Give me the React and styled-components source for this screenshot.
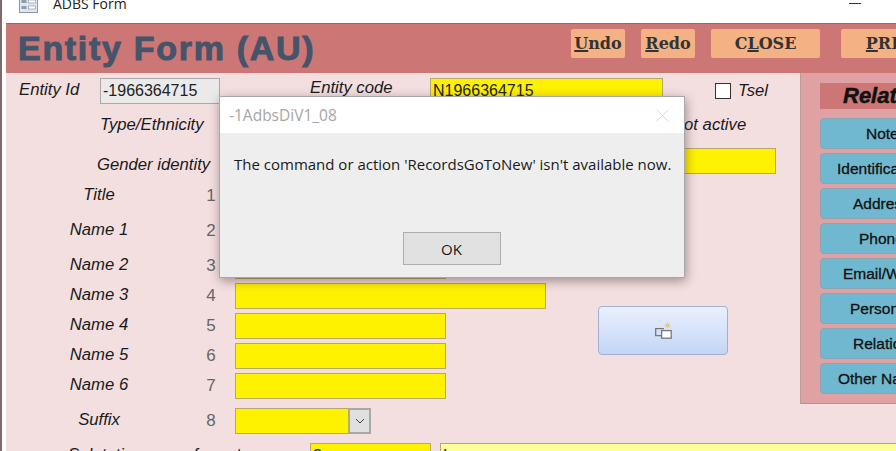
import styled, { createGlobalStyle } from 'styled-components';

const GlobalStyle = createGlobalStyle`
  html, body {
    margin: 0;
    padding: 0;
    width: 896px;
    height: 451px;
    overflow: hidden;
    background: #fff;
    font-family: "Liberation Sans", Arial, sans-serif;
  }
`;

const Window = styled.div`
  position: relative;
  width: 896px;
  height: 451px;
  overflow: hidden;
  box-sizing: border-box;
  border-left: 2px solid #7d6b6b;
  padding-left: 4px;
  background: #fff;
`;

const TitleBar = styled.div`
  display: flex;
  align-items: flex-start;
  height: 23px;
  margin-left: -4px;
  padding-left: 17px;
  overflow: hidden;
  position: relative;
`;

const TitleIcon = styled.svg`
  flex: 0 0 auto;
  width: 20px;
  height: 13px;
`;

const TitleText = styled.div`
  font-family: "Open Sans", "Noto Sans", sans-serif;
  font-size: 14px;
  line-height: 14px;
  margin: -3px 0 0 14px;
  color: #222;
`;

const Minimize = styled.div`
  width: 12px;
  height: 1px;
  margin: 3px 35px 0 auto;
  background: #333;
`;

const Header = styled.div`
  display: flex;
  align-items: flex-start;
  box-sizing: border-box;
  height: 50px;
  border-top: 1px solid #a85f5e;
  background: #cc7775;
  padding: 5px 0 0 12px;
`;

const HeaderTitle = styled.div`
  flex: 0 0 auto;
  width: 553px;
  font-size: 34px;
  line-height: 38px;
  font-weight: bold;
  letter-spacing: 1.7px;
  color: #44546a;
  -webkit-text-stroke: 1px #44546a;
  white-space: nowrap;
`;

const HeaderButton = styled.button`
  flex: 0 0 auto;
  width: ${(p) => p.$w}px;
  height: 29px;
  margin-right: ${(p) => p.$gap}px;
  padding: 0;
  border: 0;
  border-radius: 2px;
  background: #f4b183;
  color: #333;
  font-family: "DejaVu Serif", "Liberation Serif", serif;
  font-size: 16px;
  font-weight: bold;
  text-align: center;
  white-space: nowrap;
  u { text-decoration-thickness: 2px; }
`;

const Form = styled.div`
  background: #f3dfe0;
  height: 378px;
  overflow: hidden;
`;

const Upper = styled.div`
  display: flex;
  height: 331px;
`;

const LeftColumn = styled.div`
  width: 794px;
  flex: 0 0 auto;
`;

const TopRow = styled.div`
  display: flex;
  align-items: center;
  height: 26px;
  margin-top: ${(p) => p.$top}px;
  padding-left: ${(p) => p.$left}px;
`;

const Label = styled.div`
  flex: 0 0 auto;
  box-sizing: border-box;
  width: ${(p) => (p.$w ? `${p.$w}px` : 'auto')};
  padding: ${(p) => p.$down ?? 0}px 0 ${(p) => p.$lift ?? 3}px ${(p) => p.$indent ?? 0}px;
  font-size: 16.7px;
  line-height: 20px;
  font-style: italic;
  color: #1a1a1a;
  white-space: nowrap;
`;

const Field = styled.div`
  flex: 0 0 auto;
  box-sizing: border-box;
  width: ${(p) => p.$w}px;
  height: 26px;
  margin-left: ${(p) => p.$left ?? 0}px;
  border: 1px solid #b5a868;
  background: ${(p) => p.$bg ?? '#fff200'};
  padding-left: 2px;
  font-size: 16px;
  line-height: 24px;
  color: #222;
  overflow: hidden;
`;

const ReadOnlyField = styled(Field)`
  border-color: #a9a9a9;
  background: #eaeaea;
`;

const CheckBox = styled.div`
  flex: 0 0 auto;
  box-sizing: border-box;
  width: 16px;
  height: 16px;
  margin: 0 7px 0 52px;
  border: 1px solid #333;
  background: #fff;
`;

const NameRow = styled.div`
  display: grid;
  grid-template-columns: 118px 29px 48px auto;
  align-items: center;
  height: 26px;
  margin-top: ${(p) => p.$top ?? 4}px;
  padding-left: 34px;
`;

const NameLabel = styled(Label)`
  text-align: center;
`;

const Num = styled.div`
  grid-column: 3;
  font-size: 17px;
  line-height: 20px;
  color: #666;
  text-align: center;
`;

const NameArea = styled.div`
  display: flex;
  align-items: flex-start;
`;

const NameStack = styled.div`
  width: 592px;
  flex: 0 0 auto;
`;

const NewButton = styled.button`
  display: flex;
  align-items: center;
  justify-content: center;
  box-sizing: border-box;
  width: 130px;
  height: 49px;
  margin-top: 27px;
  padding: 0;
  border: 1px solid #9fb0d0;
  border-radius: 4px;
  background: linear-gradient(#eaf0fc, #c3d6f7);
`;

const Panel = styled.div`
  box-sizing: border-box;
  flex: 1 1 auto;
  min-width: 0;
  height: 331px;
  overflow: hidden;
  border-left: 1px solid #bb9a9a;
  border-bottom: 1px solid #b59292;
  background: #dfa1a3;
  padding: 10px 0 0 19px;
`;

const PanelTitle = styled.div`
  box-sizing: border-box;
  width: 134px;
  height: 26px;
  background: #cc7775;
  padding-left: 23px;
  font-size: 22px;
  line-height: 26px;
  font-weight: bold;
  font-style: italic;
  color: #111;
  -webkit-text-stroke: 0.5px #111;
  white-space: nowrap;
`;

const PanelList = styled.div`
  display: flex;
  flex-direction: column;
  gap: 4px;
  width: 134px;
  margin-top: 9px;
`;

const PanelButton = styled.button`
  box-sizing: border-box;
  width: 134px;
  height: 31px;
  padding: 0 0 0 ${(p) => p.$indent}px;
  border: 1px solid #8fa5ad;
  border-radius: 4px;
  background: #70b8cf;
  color: #111;
  font-family: "Liberation Sans", Arial, sans-serif;
  font-size: 15.5px;
  -webkit-text-stroke: 0.3px #111;
  text-align: left;
  white-space: nowrap;
`;

const SuffixRow = styled(NameRow)`
  grid-template-columns: 118px 29px 48px 114px 22px;
`;

const ComboArrow = styled.div`
  display: flex;
  align-items: center;
  justify-content: center;
  box-sizing: border-box;
  height: 26px;
  border: 2px solid #a9a9a9;
  border-left: 1px solid #a9a9a9;
  background: #e0e0e0;
`;

const SalutationRow = styled.div`
  display: flex;
  align-items: flex-start;
  margin-top: 9px;
  padding-left: 62px;
`;

const SalutationLabel = styled(Label)`
  width: 242px;
  padding: 0;
  margin-top: 2px;
`;

const Dialog = styled.div`
  position: absolute;
  left: 217px;
  top: 96px;
  box-sizing: border-box;
  width: 466px;
  height: 182px;
  border: 1px solid #a8a8a8;
  background: #eeeeee;
  box-shadow: 1px 3px 10px rgba(60, 40, 40, 0.45);
  font-family: "Open Sans", "Noto Sans", sans-serif;
`;

const DialogHead = styled.div`
  display: flex;
  align-items: center;
  justify-content: space-between;
  height: 36px;
  padding: 0 15px 0 9px;
  background: #fff;
  color: #a6a6a6;
  font-size: 15.5px;
`;

const DialogMessage = styled.div`
  margin: 21px 0 0 14px;
  font-size: 15px;
  line-height: 20px;
  color: #1a1a1a;
  white-space: nowrap;
`;

const DialogFooter = styled.div`
  display: flex;
  justify-content: center;
  margin-top: 58px;
  padding-right: 1px;
`;

const OkButton = styled.button`
  box-sizing: border-box;
  width: 98px;
  height: 33px;
  padding: 0;
  border: 1px solid #adadad;
  background: #e1e1e1;
  color: #1a1a1a;
  font-family: "Open Sans", "Noto Sans", sans-serif;
  font-size: 15px;
`;

const FormIcon = () => (
  <TitleIcon viewBox="0 0 20 13">
    <rect x="0.5" y="-4" width="18" height="16.5" fill="#dfe6ef" stroke="#8c97a6" />
    <rect x="2.5" y="0" width="5" height="3" fill="#8e9cae" />
    <rect x="9.5" y="0" width="7" height="3" fill="#fff" stroke="#8e9cae" strokeWidth="0.7" />
    <rect x="2.5" y="6" width="5" height="3" fill="#8e9cae" />
    <rect x="9.5" y="6" width="7" height="3" fill="#fff" stroke="#8e9cae" strokeWidth="0.7" />
  </TitleIcon>
);

const NewRecordIcon = () => (
  <svg width="17" height="17" viewBox="0 0 17 17">
    <path d="M9 6.6H0.7V13.6H6.5" fill="none" stroke="#777" strokeWidth="1.3" />
    <rect x="6.6" y="8.6" width="9.6" height="7.6" fill="#fff" stroke="#777" strokeWidth="1.3" />
    <path
      d="M12.5 0.4V6.6M9.4 3.5H15.6M10.3 1.3L14.7 5.7M14.7 1.3L10.3 5.7"
      stroke="#e3cc85"
      strokeWidth="1"
      fill="none"
    />
  </svg>
);

const CloseIcon = () => (
  <svg width="13" height="13" viewBox="0 0 13 13">
    <path d="M0.5 0.5L12.5 12.5M12.5 0.5L0.5 12.5" stroke="#dcdcdc" strokeWidth="1" />
  </svg>
);

const ChevronIcon = () => (
  <svg width="10" height="6" viewBox="0 0 10 6">
    <path d="M1 1L5 5L9 1" fill="none" stroke="#444" strokeWidth="1" />
  </svg>
);

const panelItems = [
  { text: 'Notes', indent: 45 },
  { text: 'Identification', indent: 16 },
  { text: 'Addresses', indent: 32 },
  { text: 'Phones', indent: 38 },
  { text: 'Email/Web', indent: 22 },
  { text: 'Personal', indent: 29 },
  { text: 'Relations', indent: 32 },
  { text: 'Other Names', indent: 17 },
];

const stackedNames = [
  { label: 'Name 3', num: 4, width: 311, top: 4 },
  { label: 'Name 4', num: 5, width: 211 },
  { label: 'Name 5', num: 6, width: 211 },
  { label: 'Name 6', num: 7, width: 211 },
];

export default function App() {
  return (
    <Window>
      <GlobalStyle />
      <TitleBar>
        <FormIcon />
        <TitleText>ADBS Form</TitleText>
        <Minimize />
      </TitleBar>
      <Header>
        <HeaderTitle>Entity Form (AU)</HeaderTitle>
        <HeaderButton $w={54} $gap={16}><u>U</u>ndo</HeaderButton>
        <HeaderButton $w={54} $gap={16}><u>R</u>edo</HeaderButton>
        <HeaderButton $w={109} $gap={21}>C<u>L</u>OSE</HeaderButton>
        <HeaderButton $w={109} $gap={0}><u>P</u>RINT</HeaderButton>
      </Header>
      <Form>
        <Upper>
          <LeftColumn>
            <TopRow $top={5} $left={13}>
              <Label $w={81} $lift={2}>Entity Id</Label>
              <ReadOnlyField $w={120}>-1966364715</ReadOnlyField>
              <Label $w={210} $lift={6} $indent={90}>Entity code</Label>
              <Field $w={233}>N1966364715</Field>
              <CheckBox />
              <Label $lift={0}>Tsel</Label>
            </TopRow>
            <TopRow $top={8} $left={94}>
              <Label $w={572} $lift={0}>Type/Ethnicity</Label>
              <Label $lift={0}>Not active</Label>
            </TopRow>
            <TopRow $top={10} $left={91}>
              <Label $w={463} $lift={0} $down={8}>Gender identity</Label>
              <Field $w={216} />
            </TopRow>
            <NameRow $top={9}>
              <NameLabel>Title</NameLabel>
              <Num>1</Num>
              <Field $w={100} />
            </NameRow>
            <NameRow $top={9}>
              <NameLabel>Name 1</NameLabel>
              <Num>2</Num>
              <Field $w={211} />
            </NameRow>
            <NameRow $top={9}>
              <NameLabel>Name 2</NameLabel>
              <Num>3</Num>
              <Field $w={211} />
            </NameRow>
            <NameArea>
              <NameStack>
                {stackedNames.map((row) => (
                  <NameRow key={row.num} $top={row.top}>
                    <NameLabel>{row.label}</NameLabel>
                    <Num>{row.num}</Num>
                    <Field $w={row.width} />
                  </NameRow>
                ))}
              </NameStack>
              <NewButton aria-label="New">
                <NewRecordIcon />
              </NewButton>
            </NameArea>
          </LeftColumn>
          <Panel>
            <PanelTitle>Related</PanelTitle>
            <PanelList>
              {panelItems.map((item) => (
                <PanelButton key={item.text} $indent={item.indent}>{item.text}</PanelButton>
              ))}
            </PanelList>
          </Panel>
        </Upper>
        <SuffixRow $top={4}>
          <NameLabel>Suffix</NameLabel>
          <Num>8</Num>
          <Field $w={114} />
          <ComboArrow><ChevronIcon /></ComboArrow>
        </SuffixRow>
        <SalutationRow>
          <SalutationLabel>Salutation name format</SalutationLabel>
          <Field $w={121}>2</Field>
          <Field $w={460} $left={9} $bg="#ffff99">I</Field>
        </SalutationRow>
      </Form>
      <Dialog>
        <DialogHead>
          <span>-1AdbsDiV1_08</span>
          <CloseIcon />
        </DialogHead>
        <DialogMessage>The command or action 'RecordsGoToNew' isn't available now.</DialogMessage>
        <DialogFooter>
          <OkButton>OK</OkButton>
        </DialogFooter>
      </Dialog>
    </Window>
  );
}
